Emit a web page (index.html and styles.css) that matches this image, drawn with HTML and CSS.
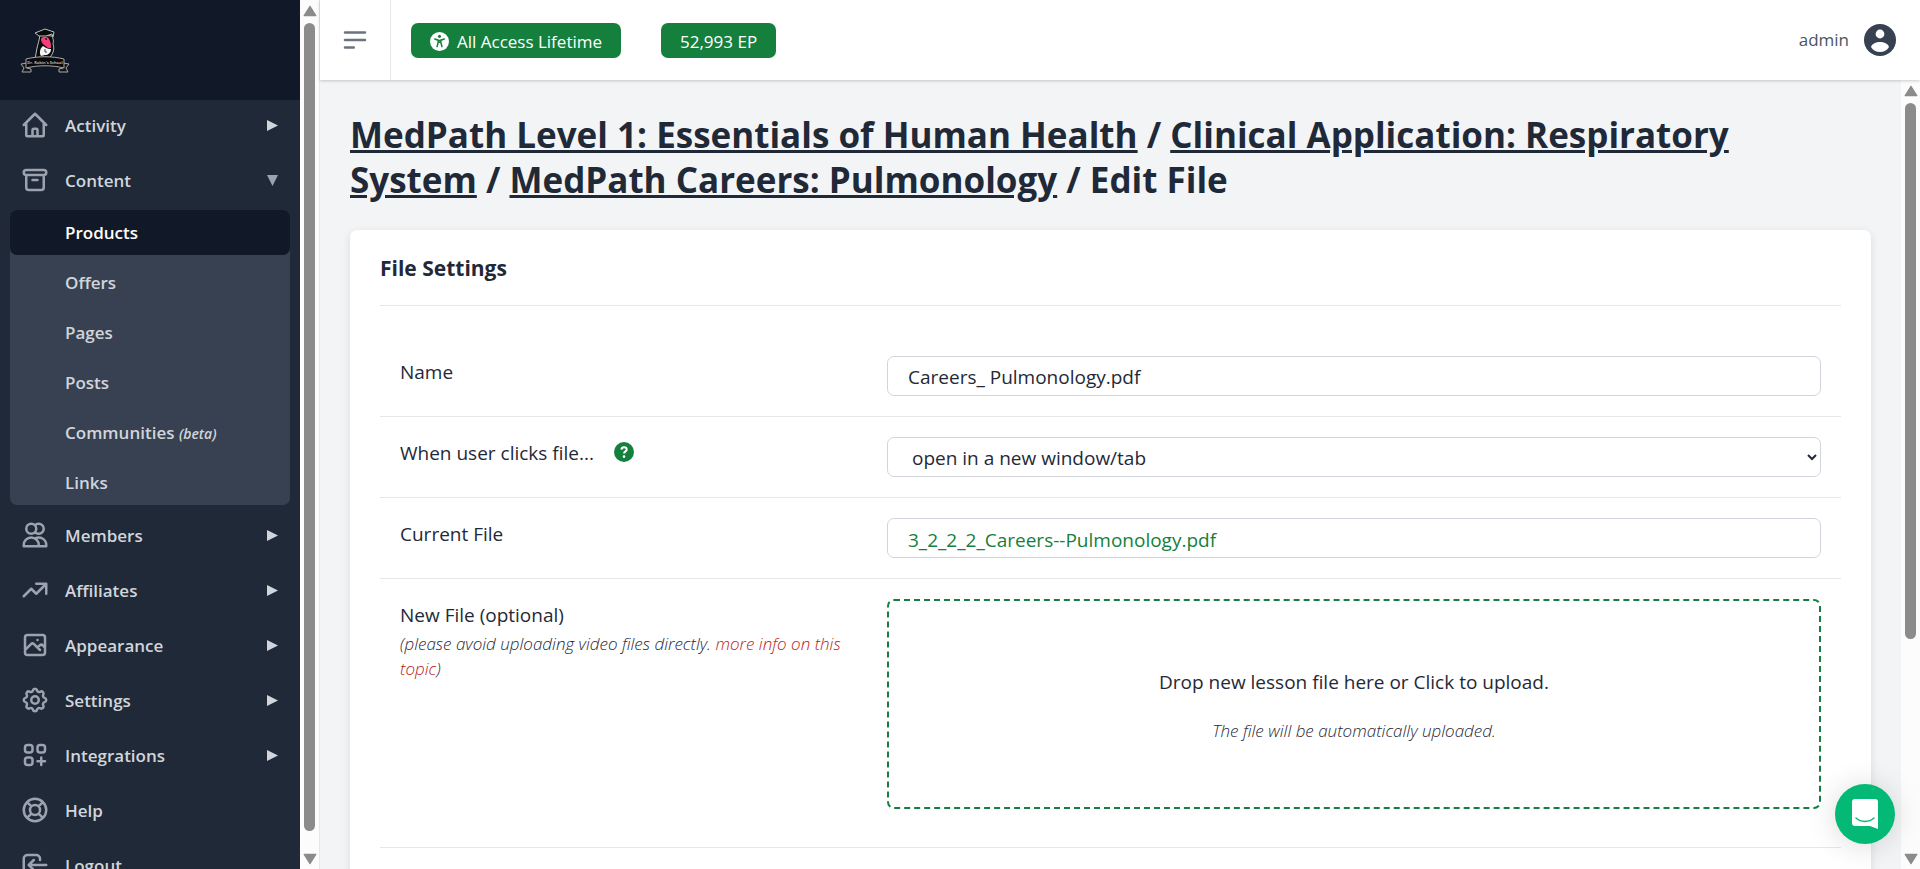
FILE: index.html
```html
<!DOCTYPE html>
<html lang="en">
  <head>
    <meta charset="UTF-8" />
    <meta name="viewport" content="width=device-width, initial-scale=1.0" />
    <title>Edit File</title>
    <link rel="stylesheet" href="styles.css">
  </head>
  <body>
    <div class="app">
      <aside class="sidebar">
        <a class="logo" href="#" aria-label="Home">
          <svg width="50" height="45" viewBox="0 0 50 45">
            <path d="M20 7 C19 13 18 16 17 20 L15 31 H28 C33 27 35 21 33 16 C34 13 33 10 32 8 Z" fill="#0a0a0a" stroke="#bdbdbd" stroke-width="1" />
            <path d="M15 5 L25 1 L34 4 L33 9 L32 6 L26 8 L19 8 Z" fill="#0a0a0a" stroke="#bdbdbd" stroke-width="1" stroke-linejoin="round" />
            <path d="M21 11 C22 8 28 8 29 11 C31 14 31 17 31 20 L28 20 C25 17 21 16 21 11 Z" fill="#f43f7a" />
            <circle cx="26" cy="11" r="1" fill="#3b1220" />
            <path d="M23 18 C25 19 27 21 31 21 C31 25 28 27 25 27 L21 28 C19 25 20 20 23 18 Z" fill="#f5f5f5" />
            <path d="M25 21 V24 H27 M20 28 L19 31 M26 28 L27 31" fill="none" stroke="#444" />
            <path d="M1 36 L7 35 V40 L11 41 V44 L2 44 L4 40 Z M49 36 L43 35 V40 L39 41 V44 L48 44 L46 40 Z" fill="#161616" stroke="#a8a8a8" stroke-width="1" />
            <path d="M6 31 C18 28 32 28 44 31 V40 C32 37 18 37 6 40 Z" fill="#0a0a0a" stroke="#a8a8a8" stroke-width="1" />
            <text x="25" y="36" text-anchor="middle" font-size="4" font-weight="700" fill="#b5b5b5">Dr. Robin's School</text>
          </svg>
        </a>
        <nav class="menu">
          <a class="menu-item" href="#">
            <svg class="icon" viewBox="0 0 24 24"><path d="M3 12l2-2m0 0l7-7 7 7M5 10v10a1 1 0 001 1h3m10-11l2 2m-2-2v10a1 1 0 01-1 1h-3m-6 0a1 1 0 001-1v-4a1 1 0 011-1h2a1 1 0 011 1v4a1 1 0 001 1m-6 0h6" /></svg>
            <span>Activity</span>
            <svg class="caret" viewBox="0 0 12 12"><path d="M0 0L12 6 0 12z" /></svg>
          </a>
          <a class="menu-item open" href="#">
            <svg class="icon" viewBox="0 0 24 24"><path d="M5 8h14M5 8a2 2 0 110-4h14a2 2 0 110 4M5 8v10a2 2 0 002 2h10a2 2 0 002-2V8m-9 4h4" /></svg>
            <span>Content</span>
            <svg class="caret" viewBox="0 0 12 12"><path d="M0 0H12L6 12z" /></svg>
          </a>
          <div class="submenu">
            <a class="active" href="#">Products</a>
            <a href="#">Offers</a>
            <a href="#">Pages</a>
            <a href="#">Posts</a>
            <a href="#">Communities <em>(beta)</em></a>
            <a href="#">Links</a>
          </div>
          <a class="menu-item" href="#">
            <svg class="icon" viewBox="0 0 24 24"><path d="M12 4.354a4 4 0 110 5.292M15 21H3v-1a6 6 0 0112 0v1zm0 0h6v-1a6 6 0 00-9-5.197M13 7a4 4 0 11-8 0 4 4 0 018 0z" /></svg>
            <span>Members</span>
            <svg class="caret" viewBox="0 0 12 12"><path d="M0 0L12 6 0 12z" /></svg>
          </a>
          <a class="menu-item" href="#">
            <svg class="icon" viewBox="0 0 24 24"><path d="M13 7h8m0 0v8m0-8l-8 8-4-4-6 6" /></svg>
            <span>Affiliates</span>
            <svg class="caret" viewBox="0 0 12 12"><path d="M0 0L12 6 0 12z" /></svg>
          </a>
          <a class="menu-item" href="#">
            <svg class="icon" viewBox="0 0 24 24"><path d="M4 16l4.586-4.586a2 2 0 012.828 0L16 16m-2-2l1.586-1.586a2 2 0 012.828 0L20 14m-6-6h.01M6 20h12a2 2 0 002-2V6a2 2 0 00-2-2H6a2 2 0 00-2 2v12a2 2 0 002 2z" /></svg>
            <span>Appearance</span>
            <svg class="caret" viewBox="0 0 12 12"><path d="M0 0L12 6 0 12z" /></svg>
          </a>
          <a class="menu-item" href="#">
            <svg class="icon" viewBox="0 0 24 24"><path d="M10.325 4.317c.426-1.756 2.924-1.756 3.35 0a1.724 1.724 0 002.573 1.066c1.543-.94 3.31.826 2.37 2.37a1.724 1.724 0 001.065 2.572c1.756.426 1.756 2.924 0 3.35a1.724 1.724 0 00-1.066 2.573c.94 1.543-.826 3.31-2.37 2.37a1.724 1.724 0 00-2.572 1.065c-.426 1.756-2.924 1.756-3.35 0a1.724 1.724 0 00-2.573-1.066c-1.543.94-3.31-.826-2.37-2.37a1.724 1.724 0 00-1.065-2.572c-1.756-.426-1.756-2.924 0-3.35a1.724 1.724 0 001.066-2.573c-.94-1.543.826-3.31 2.37-2.37.996.608 2.296.07 2.572-1.065z" /><path d="M15 12a3 3 0 11-6 0 3 3 0 016 0z" /></svg>
            <span>Settings</span>
            <svg class="caret" viewBox="0 0 12 12"><path d="M0 0L12 6 0 12z" /></svg>
          </a>
          <a class="menu-item" href="#">
            <svg class="icon" viewBox="0 0 24 24"><path d="M17 14v6m-3-3h6M6 10h2a2 2 0 002-2V6a2 2 0 00-2-2H6a2 2 0 00-2 2v2a2 2 0 002 2zm10 0h2a2 2 0 002-2V6a2 2 0 00-2-2h-2a2 2 0 00-2 2v2a2 2 0 002 2zM6 20h2a2 2 0 002-2v-2a2 2 0 00-2-2H6a2 2 0 00-2 2v2a2 2 0 002 2z" /></svg>
            <span>Integrations</span>
            <svg class="caret" viewBox="0 0 12 12"><path d="M0 0L12 6 0 12z" /></svg>
          </a>
          <a class="menu-item" href="#">
            <svg class="icon" viewBox="0 0 24 24"><path d="M18.364 5.636l-3.536 3.536m0 5.656l3.536 3.536M9.172 9.172L5.636 5.636m3.536 9.192l-3.536 3.536M21 12a9 9 0 11-18 0 9 9 0 0118 0zm-5 0a4 4 0 11-8 0 4 4 0 018 0z" /></svg>
            <span>Help</span>
          </a>
          <a class="menu-item" href="#">
            <svg class="icon" viewBox="0 0 24 24"><path d="M11 16l-4-4m0 0l4-4m-4 4h14m-5 4v1a3 3 0 01-3 3H6a3 3 0 01-3-3V7a3 3 0 013-3h7a3 3 0 013 3v1" /></svg>
            <span>Logout</span>
          </a>
        </nav>
      </aside>
      <div class="scrollbar side-scroll">
        <svg class="arrow" viewBox="0 0 12 10"><path d="M6 1L11 9H1z" /></svg>
        <div class="track"><div class="thumb"></div></div>
        <svg class="arrow" viewBox="0 0 12 10"><path d="M6 9L11 1H1z" /></svg>
      </div>

      <div class="page">
        <header class="topbar">
          <button class="toggle" aria-label="Toggle menu">
            <svg class="icon" viewBox="0 0 24 24"><path d="M4 6h16M4 12h16M4 18h7" /></svg>
          </button>
          <div class="badges">
            <button class="badge">
              <svg width="19" height="19" viewBox="0 0 20 20">
                <circle cx="10" cy="10" r="10" fill="#fff" />
                <circle cx="10" cy="4.6" r="1.6" fill="#15803d" />
                <path d="M5 7.4L8.6 8.6V11L7.4 15.4M15 7.4L11.4 8.6V11L12.6 15.4M8.6 9H11.4M8.8 10.8H11.2" fill="none" stroke="#15803d" stroke-width="1.6" stroke-linecap="round" />
              </svg>
              All Access Lifetime
            </button>
            <button class="badge">52,993 EP</button>
          </div>
          <a class="user" href="#">
            admin
            <svg width="32" height="32" viewBox="0 0 32 32">
              <circle cx="16" cy="16" r="16" fill="#374151" />
              <circle cx="16" cy="10" r="4.4" fill="#fff" />
              <path d="M7 23C8 19.5 12 18 16 18s8 1.5 9 5C23 26.5 20 28 16 28S9 26.5 7 23z" fill="#fff" />
            </svg>
          </a>
        </header>

        <div class="body">
          <main class="main">
            <h1><a href="#">MedPath Level 1: Essentials of Human Health</a> / <a href="#">Clinical Application: Respiratory System</a> / <a href="#">MedPath Careers: Pulmonology</a> / Edit File</h1>
            <form class="card">
              <h2>File Settings</h2>
              <div class="row">
                <label for="name">Name</label>
                <input class="field" type="text" id="name" value="Careers_ Pulmonology.pdf">
              </div>
              <div class="row">
                <div class="with-help">
                  <label for="behavior">When user clicks file...</label>
                  <svg width="20" height="20" viewBox="0 0 20 20">
                    <circle cx="10" cy="10" r="10" fill="#15803d" />
                    <path d="M7.4 7.6C7.6 5.9 8.7 5.2 10 5.2c1.500 0 2.700.9 2.700 2.300 0 1.900-2.600 1.900-2.600 3.900" fill="none" stroke="#fff" stroke-width="2" />
                    <circle cx="10" cy="14.6" r="1.3" fill="#fff" />
                  </svg>
                </div>
                <select class="field" id="behavior">
                  <option>open in a new window/tab</option>
                  <option>download the file</option>
                </select>
              </div>
              <div class="row">
                <div>Current File</div>
                <div class="field"><a href="#">3_2_2_2_Careers--Pulmonology.pdf</a></div>
              </div>
              <div class="row upload">
                <div>
                  <label for="file">New File (optional)</label>
                  <p class="hint">(please avoid uploading video files directly. <a href="#">more info on this topic</a>)</p>
                </div>
                <label class="dropzone">
                  <input type="file" id="file">
                  <span>Drop new lesson file here or Click to upload.</span>
                  <span class="hint">The file will be automatically uploaded.</span>
                </label>
              </div>
            </form>
          </main>
          <div class="scrollbar main-scroll">
            <svg class="arrow" viewBox="0 0 12 10"><path d="M6 1L11 9H1z" /></svg>
            <div class="track"><div class="thumb"></div></div>
            <svg class="arrow" viewBox="0 0 12 10"><path d="M6 9L11 1H1z" /></svg>
          </div>
        </div>
      </div>
    </div>

    <button class="chat" aria-label="Open chat">
      <svg width="28" height="32" viewBox="0 0 28 32">
        <path d="M4 1H24a3 3 0 0 1 3 3V31L19 28H4a3 3 0 0 1-3-3V4a3 3 0 0 1 3-3z" fill="#fff" />
        <path d="M5 20C10 24.500 18 24.500 23 20" fill="none" stroke="#04b876" stroke-width="1.500" stroke-linecap="round" />
      </svg>
    </button>
  </body>
</html>
```
FILE: styles.css
```css
* {
  box-sizing: border-box;
}
body {
  margin: 0;
  font-family: "Open Sans", "Noto Sans", sans-serif;
  font-size: 19px;
  line-height: 30px;
  color: #1f2937;
  background-color: #f3f4f6;
}
a {
  color: inherit;
  text-decoration: none;
}
button {
  font-family: inherit;
  border: none;
  cursor: pointer;
}
.app {
  display: flex;
  height: 100vh;
  overflow: hidden;
}

/* sidebar */
.sidebar {
  width: 300px;
  flex-shrink: 0;
  overflow: hidden;
  background-color: #1f2937;
}
.logo {
  display: flex;
  align-items: center;
  height: 100px;
  padding: 0 20px;
  background-color: #111827;
}
.menu {
  display: flex;
  flex-direction: column;
  gap: 5px;
  padding: 0 10px;
  font-size: 17px;
  font-weight: 600;
  color: #d1d5db;
}
.menu-item {
  display: flex;
  align-items: center;
  gap: 15px;
  height: 50px;
  padding: 0 12px 0 10px;
}
.menu-item span {
  flex: 1;
  padding-top: 2px;
}
.icon {
  width: 30px;
  height: 30px;
  fill: none;
  stroke: #9ca3af;
  stroke-width: 2;
  stroke-linecap: round;
  stroke-linejoin: round;
}
.caret {
  width: 11px;
  height: 11px;
  fill: #d1d5db;
}
.open .caret {
  fill: #9ca3af;
}
.submenu {
  display: flex;
  flex-direction: column;
  gap: 5px;
  border-radius: 7px;
  background-color: #374151;
}
.submenu a {
  height: 45px;
  padding-left: 55px;
  line-height: 46px;
  border-radius: 7px;
}
.submenu .active {
  color: white;
  background-color: #111827;
}
.submenu em {
  font-size: 14px;
}

/* scrollbars */
.scrollbar {
  display: flex;
  flex-direction: column;
  align-items: center;
  flex-shrink: 0;
  width: 19px;
  padding: 5px 0 4px;
  background-color: #fcfcfc;
}
.arrow {
  width: 14px;
  height: 12px;
  fill: #8b8b8b;
  stroke: #8b8b8b;
  stroke-linejoin: round;
}
.track {
  flex: 1;
  width: 11px;
  padding: 6px 0;
}
.thumb {
  border-radius: 6px;
  background-color: #8b8b8b;
}
.side-scroll .thumb {
  height: 98%;
}
.main-scroll .thumb {
  height: 72%;
}

/* top bar */
.page {
  display: flex;
  flex-direction: column;
  flex: 1;
  min-width: 0;
  border-left: 1px solid #e5e7eb;
}
.topbar {
  display: flex;
  align-items: center;
  flex-shrink: 0;
  height: 80px;
  padding-right: 24px;
  background-color: white;
  box-shadow: 0 1px 3px rgba(0, 0, 0, 0.2);
  z-index: 1;
}
.toggle {
  align-self: stretch;
  display: flex;
  align-items: center;
  padding: 0 20px;
  background: none;
  border-right: 1px solid #e5e7eb;
}
.toggle .icon {
  stroke: #6b7280;
}
.badges {
  display: flex;
  gap: 40px;
  margin-left: 20px;
}
.badge {
  display: flex;
  align-items: center;
  gap: 8px;
  height: 35px;
  padding: 2px 19px 0;
  border-radius: 7px;
  font-size: 17px;
  color: white;
  background-color: #15803d;
}
.user {
  display: flex;
  align-items: center;
  gap: 15px;
  margin-left: auto;
  font-size: 17px;
  color: #4b5563;
}

/* content */
.body {
  display: flex;
  flex: 1;
  min-height: 0;
}
.main {
  flex: 1;
  min-width: 0;
  overflow: hidden;
  padding: 32px 30px;
}
h1 {
  margin: 0 0 28px;
  padding-right: 30px;
  font-size: 35px;
  line-height: 45px;
}
h1 a {
  text-decoration: underline;
}
.card {
  padding: 0 30px 30px;
  border-radius: 7px;
  background-color: white;
  box-shadow: 0 2px 8px rgba(0, 0, 0, 0.1);
}
h2 {
  margin: 0 0 30px;
  padding: 23px 0 22px;
  font-size: 21px;
  line-height: 30px;
  border-bottom: 1px solid #e5e7eb;
}
.row {
  display: grid;
  grid-template-columns: repeat(3, 1fr);
  column-gap: 40px;
  padding: 20px;
  line-height: 32px;
  border-bottom: 1px solid #e5e7eb;
}
.with-help {
  display: flex;
  gap: 20px;
}
.with-help svg {
  margin-top: 5px;
}
.field,
.dropzone {
  grid-column: span 2;
}
.field {
  width: 100%;
  height: 40px;
  padding: 2px 20px 0;
  border: 1px solid #d1d5db;
  border-radius: 7px;
  font: inherit;
  line-height: 38px;
  color: #1f2937;
  background-color: white;
}
select.field {
  padding-right: 0;
}
.field a {
  color: #15803d;
}
.hint {
  margin: 0;
  font-size: 17px;
  font-style: italic;
  font-weight: 300;
  line-height: 25px;
}
.hint a {
  color: #b91c1c;
}
.upload {
  padding-bottom: 38px;
}
.dropzone {
  display: flex;
  flex-direction: column;
  align-items: center;
  justify-content: center;
  gap: 20px;
  height: 210px;
  border: 2px dashed #15803d;
  border-radius: 7px;
  cursor: pointer;
}
.dropzone input {
  display: none;
}

/* chat bubble */
.chat {
  position: fixed;
  right: 25px;
  bottom: 25px;
  z-index: 2;
  display: flex;
  align-items: center;
  justify-content: center;
  width: 60px;
  height: 60px;
  border-radius: 50%;
  background-color: #04b876;
  box-shadow: 0 2px 30px rgba(0, 0, 0, 0.15);
}
```
